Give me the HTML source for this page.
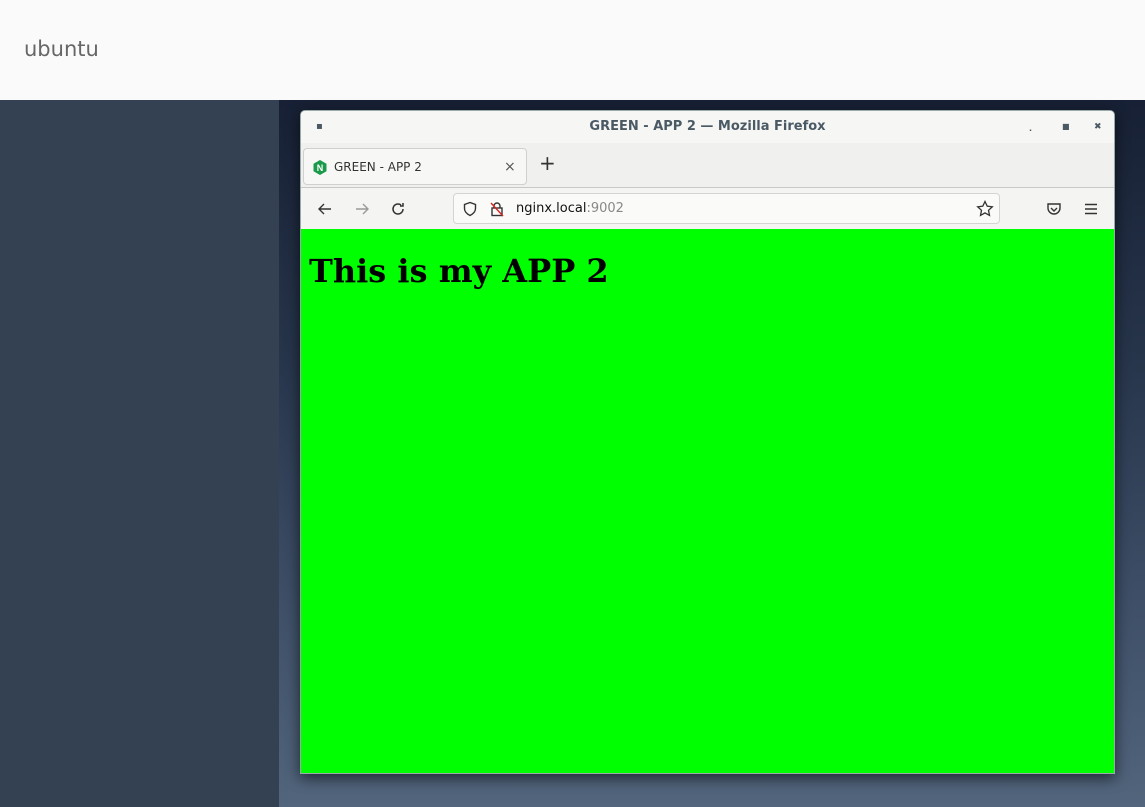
<!DOCTYPE html>
<html><head><meta charset="utf-8"><style>
*{margin:0;padding:0;box-sizing:border-box}
body{width:1145px;height:807px;overflow:hidden;position:relative;font-family:"DejaVu Sans","Liberation Sans",sans-serif;background:#334153}
#top{position:absolute;left:0;top:0;width:1145px;height:100px;background:#fafafa}
#top span{position:absolute;left:24px;top:37px;font-size:21px;color:#666;font-family:"DejaVu Sans",sans-serif}
#left{position:absolute;left:0;top:100px;width:279px;height:707px;background:#344152}
#desk{position:absolute;left:279px;top:100px;width:866px;height:707px;background:linear-gradient(180deg,#172034 0%,#26344a 35%,#3d4e66 70%,#52657c 100%)}
#win{position:absolute;left:300px;top:110px;width:815px;height:664px;background:#f2f3f1;border-radius:5px 5px 0 0;box-shadow:0 4px 14px rgba(0,0,0,.6);overflow:hidden;border:1px solid #9aa}
#title{height:32px;background:#f6f7f5;text-align:center;font-weight:bold;font-size:13px;color:#4a5964;line-height:32px;position:relative}
#tabs{height:45px;background:#f0f1ef;position:relative;border-bottom:1px solid #c8c8c8}
.tab{position:absolute;left:2px;top:5px;width:224px;height:37px;background:#f7f8f6;border:1px solid #d0d0d0;border-radius:4px;font-size:12px;color:#333;line-height:37px}
#nav{height:41px;background:#f4f5f3;position:relative}
#url{position:absolute;left:152px;top:5px;width:547px;height:31px;background:#fafbf9;border:1px solid #d4d4d4;border-radius:4px}
#content{position:absolute;left:0;top:118px;width:815px;height:546px;background:#00ff00}
h1{font-family:"DejaVu Serif",serif;font-size:32px;font-weight:bold;margin:23px 0 0 8px;color:#000}
</style></head><body>
<div id="top"><span>ubuntu</span></div>
<div id="left"></div>
<div id="desk"></div>
<div id="win">
 <div id="title"><span style="position:absolute;left:15px;top:0;font-size:10px">▪</span>GREEN - APP 2 — Mozilla Firefox
  <span style="position:absolute;left:728px;top:2px;font-size:8px">.</span>
  <span style="position:absolute;left:761px;top:0;font-size:8px">■</span>
  <span style="position:absolute;left:793px;top:0;font-size:9px">✖</span></div>
 <div id="tabs"><div class="tab">
  <svg style="position:absolute;left:9px;top:11px" width="14" height="15" viewBox="0 0 14 15"><polygon points="7,0 13.5,3.75 13.5,11.25 7,15 0.5,11.25 0.5,3.75" fill="#1a9a4a"/><text x="7" y="11" font-size="9" font-weight="bold" fill="#fff" text-anchor="middle" font-family="Liberation Sans">N</text></svg>
  <span style="position:absolute;left:30px;top:0">GREEN - APP 2</span>
  <span style="position:absolute;left:200px;top:0;color:#555;font-size:14px">×</span></div>
  <span style="position:absolute;left:238px;top:8px;font-size:20px;color:#333">+</span></div>
 <div id="nav">
  <svg style="position:absolute;left:16px;top:13px" width="16" height="16" viewBox="0 0 16 16" fill="none" stroke="#333" stroke-width="1.4"><path d="M14 8H2M7 3L2 8l5 5"/></svg>
  <svg style="position:absolute;left:53px;top:13px" width="16" height="16" viewBox="0 0 16 16" fill="none" stroke="#999" stroke-width="1.4"><path d="M2 8h12M9 3l5 5-5 5"/></svg>
  <svg style="position:absolute;left:89px;top:13px" width="16" height="16" viewBox="0 0 16 16" fill="none" stroke="#333" stroke-width="1.5"><path d="M13 8a5 5 0 1 1-2-4M13 2v3h-3"/></svg>
  <div id="url">
   <svg style="position:absolute;left:8px;top:7px" width="16" height="16" viewBox="0 0 16 16" fill="none" stroke="#333" stroke-width="1.4"><path d="M8 1.5L2.5 3.5v4c0 3.5 2.5 5.5 5.5 7 3-1.5 5.5-3.5 5.5-7v-4z"/></svg>
   <svg style="position:absolute;left:35px;top:7px" width="16" height="16" viewBox="0 0 16 16" fill="none" stroke="#333" stroke-width="1.4"><rect x="3" y="7" width="10" height="7.5"/><path d="M5 7V5a3 3 0 0 1 6 0v2"/><path d="M2 2l12 13" stroke="#d22"/></svg>
   <span style="position:absolute;left:62px;top:7px;font-size:13px;color:#111">nginx.local<span style="color:#888">:9002</span></span>
   <svg style="position:absolute;left:522px;top:6px" width="18" height="18" viewBox="0 0 18 18" fill="none" stroke="#333" stroke-width="1.3"><path d="M9 1.5l2.2 4.7 5.1.6-3.8 3.5 1 5.1L9 12.9l-4.5 2.5 1-5.1-3.8-3.5 5.1-.6z"/></svg>
  </div>
  <svg style="position:absolute;left:745px;top:13px" width="16" height="16" viewBox="0 0 16 16" fill="none" stroke="#333" stroke-width="1.4"><path d="M2 3h12v4a6 6 0 0 1-12 0z"/><path d="M5 7l3 3 3-3"/></svg>
  <svg style="position:absolute;left:782px;top:13px" width="16" height="16" viewBox="0 0 16 16" fill="none" stroke="#333" stroke-width="1.4"><path d="M2 3.5h12M2 8h12M2 12.5h12"/></svg>
 </div>
 <div id="content"><h1>This is my APP 2</h1></div>
</div>
</body></html>
